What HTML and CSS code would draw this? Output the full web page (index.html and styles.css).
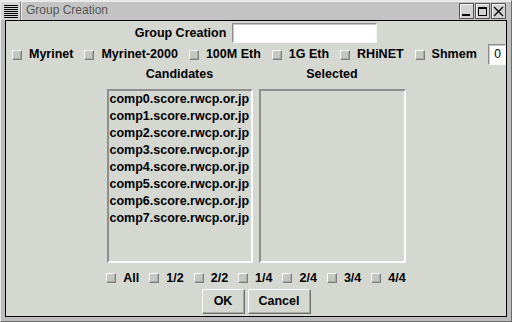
FILE: index.html
```html
<!DOCTYPE html>
<html>
<head>
<meta charset="utf-8">
<link rel="stylesheet" href="styles.css">
</head>
<body>
<div class="window">
  <div class="titlebar">
    <div class="menu-btn">
      <svg width="18" height="18" viewBox="0 0 18 18">
        <g stroke="#000" stroke-width="1">
          <line x1="3" y1="3.5" x2="17" y2="3.5"/>
          <line x1="3" y1="5.5" x2="17" y2="5.5"/>
          <line x1="3" y1="7.5" x2="17" y2="7.5"/>
          <line x1="3" y1="9.5" x2="17" y2="9.5"/>
          <line x1="3" y1="11.5" x2="17" y2="11.5"/>
          <line x1="3" y1="13.5" x2="17" y2="13.5"/>
          <line x1="3" y1="15.5" x2="17" y2="15.5"/>
        </g>
      </svg>
    </div>
    <div class="title">
      <span class="title-text">Group Creation</span>
      <div class="wm-btns">
        <div class="wm-btn">
          <svg width="13" height="14" viewBox="0 0 13 14"><rect x="2" y="10" width="8" height="2" fill="#000"/></svg>
        </div>
        <div class="wm-btn">
          <svg width="13" height="14" viewBox="0 0 13 14"><rect x="2.5" y="3.5" width="8" height="8" fill="none" stroke="#000"/><rect x="2" y="3" width="9" height="2" fill="#000"/></svg>
        </div>
        <div class="wm-btn">
          <svg width="13" height="14" viewBox="0 0 13 14"><path d="M2 3 L11 12 M11 3 L2 12" stroke="#000" stroke-width="1.3" fill="none"/></svg>
        </div>
      </div>
    </div>
  </div>
  <div class="client">
    <div class="name-row">
      <span class="lbl">Group Creation</span>
      <span class="entry wide"></span>
    </div>
    <div class="net-row">
      <span class="cb"><span class="box"></span>Myrinet</span>
      <span class="cb"><span class="box"></span>Myrinet-2000</span>
      <span class="cb"><span class="box"></span>100M Eth</span>
      <span class="cb"><span class="box"></span>1G Eth</span>
      <span class="cb"><span class="box"></span>RHiNET</span>
      <span class="cb"><span class="box"></span>Shmem</span>
      <span class="entry num">0</span>
    </div>
    <div class="pair headings">
      <div>Candidates</div>
      <div>Selected</div>
    </div>
    <div class="pair lists">
      <div class="listbox">
        <div>comp0.score.rwcp.or.jp</div>
        <div>comp1.score.rwcp.or.jp</div>
        <div>comp2.score.rwcp.or.jp</div>
        <div>comp3.score.rwcp.or.jp</div>
        <div>comp4.score.rwcp.or.jp</div>
        <div>comp5.score.rwcp.or.jp</div>
        <div>comp6.score.rwcp.or.jp</div>
        <div>comp7.score.rwcp.or.jp</div>
      </div>
      <div class="listbox"></div>
    </div>
    <div class="frac-row">
      <span class="cb"><span class="box"></span>All</span>
      <span class="cb"><span class="box"></span>1/2</span>
      <span class="cb"><span class="box"></span>2/2</span>
      <span class="cb"><span class="box"></span>1/4</span>
      <span class="cb"><span class="box"></span>2/4</span>
      <span class="cb"><span class="box"></span>3/4</span>
      <span class="cb"><span class="box"></span>4/4</span>
    </div>
    <div class="btn-row">
      <div class="btn ok">OK</div>
      <div class="btn cancel">Cancel</div>
    </div>
  </div>
</div>
</body>
</html>
```

FILE: styles.css
```css
* { box-sizing: border-box; }
html, body { margin: 0; padding: 0; }
body {
  width: 512px;
  height: 322px;
  overflow: hidden;
  font-family: "Liberation Sans", Arial, sans-serif;
  background: #bcbcbc;
}
.window {
  width: 512px;
  height: 322px;
  background: #bdbdbd;
  border: 1px solid;
  border-color: #e8e8e8 #6c6c6c #6c6c6c #e8e8e8;
  display: flex;
  flex-direction: column;
}
.titlebar {
  height: 19px;
  display: flex;
  flex: none;
}
.menu-btn {
  width: 20px;
  height: 19px;
  background: #d6d6d6;
  border-right: 1px solid #7c7c7c;
  border-top: 1px solid #f0f0f0;
}
.menu-btn svg { display: block; }
.title {
  flex: 1;
  display: flex;
  background: #c3c3c3;
  border-top: 1px solid #ececec;
  border-left: 1px solid #ececec;
  padding-left: 4px;
  padding-right: 5px;
}
.title-text {
  font-size: 12px;
  line-height: 17px;
  color: #555;
}
.wm-btns {
  margin-left: auto;
  margin-top: 1px;
  display: flex;
  gap: 1px;
  align-self: flex-start;
}
.wm-btn {
  width: 15px;
  height: 16px;
  border: 1px solid #555;
  background: #d2d2d2;
  box-shadow: inset 1px 1px 0 #f4f4f4;
}
.wm-btn svg { display: block; }
.client {
  margin: 0 4px 4px 4px;
  height: 297px;
  border: 1px solid #000;
  background: #d4d8d1;
  display: flex;
  flex-direction: column;
  font-size: 12.5px;
  font-weight: bold;
  color: #000;
}
.name-row {
  margin-top: 2px;
  height: 20px;
  display: flex;
  justify-content: center;
  align-items: center;
  gap: 6px;
}
.entry {
  display: block;
  background: #fff;
  border: 1px solid;
  border-color: #8d8d8d #f4f4f4 #f4f4f4 #8d8d8d;
  box-shadow: inset 1px 1px 0 #c6c6c6;
}
.entry.wide { width: 145px; height: 20px; }
.net-row {
  margin-top: 1px;
  height: 21px;
  display: flex;
  align-items: center;
  gap: 11px;
  padding-left: 6px;
}
.entry.num {
  margin-left: auto;
  width: 21px;
  height: 21px;
  font-weight: normal;
  font-size: 12px;
  line-height: 19px;
  text-align: right;
  padding-right: 4px;
}
.cb {
  display: flex;
  align-items: center;
  gap: 7px;
  white-space: nowrap;
  line-height: 15px;
}
.box {
  width: 10px;
  height: 10px;
  flex: none;
  background: #c4c8c1;
  border: 1px solid;
  border-color: #fbfbfb #7e7e7e #7e7e7e #fbfbfb;
  box-shadow: inset -1px -1px 0 #a6a9a3;
}
.pair {
  display: grid;
  grid-template-columns: 146px 147px;
  column-gap: 6px;
  justify-content: center;
}
.headings {
  margin-top: 2px;
  line-height: 15px;
  text-align: center;
}
.lists {
  margin-top: 7px;
  height: 174px;
}
.listbox {
  border: 2px solid;
  border-color: #8e8e8e #fbfbfb #fbfbfb #8e8e8e;
  background: #d4d8d1;
  padding-left: 1px;
  line-height: 17px;
  white-space: nowrap;
  overflow: hidden;
}
.frac-row {
  margin-top: 5px;
  height: 20px;
  display: flex;
  justify-content: center;
  align-items: center;
  gap: 10px;
}
.btn-row {
  margin-top: 1px;
  display: flex;
  justify-content: center;
  gap: 3px;
}
.btn {
  height: 25px;
  line-height: 22px;
  text-align: center;
  border: 1px solid;
  border-color: #fbfbfb #6f6f6f #6f6f6f #fbfbfb;
  box-shadow: inset -1px -1px 0 #a6a9a3;
}
.btn.ok { width: 43px; }
.btn.cancel { width: 63px; }
```
